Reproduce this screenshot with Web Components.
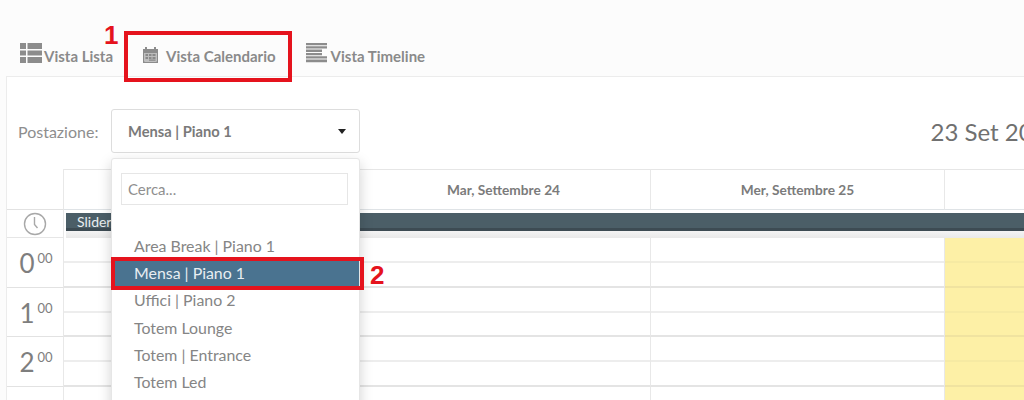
<!DOCTYPE html>
<html lang="it"><head><meta charset="utf-8"><title>Calendario</title>
<style>
html,body{margin:0;padding:0;width:1024px;height:400px;overflow:hidden;background:#fcfcfc;font-family:Lato,"Open Sans",sans-serif;color:#777}
</style></head><body>
<app-page></app-page>
<script>
function def(name,html,init){customElements.define(name,class extends HTMLElement{constructor(){super();const r=this.attachShadow({mode:"open"});r.innerHTML=html;if(init)init(this,r);}});}

def("view-tab",`<style>
:host{display:flex;align-items:center;height:100%;font:700 15px/18px Lato,sans-serif;color:#8a8a8a;gap:var(--gap,2px);padding:var(--pad,0)}
span{padding-top:6px}
::slotted(svg){display:block;flex:none}
</style><slot name="icon"></slot><span><slot></slot></span>`);

def("view-tabs",`<style>
:host{display:flex;align-items:flex-end;height:76px;box-sizing:border-box;padding:0 0 8px 20px}
.row{display:flex;height:30px;align-items:center}
</style><div class="row"><slot></slot></div>`);

def("select-box",`<style>
:host{display:flex;flex:none;align-items:center;justify-content:space-between;box-sizing:border-box;width:249px;height:44px;border:1px solid #ddd;border-radius:3px;background:#fff;padding:0 13px 0 16px;font:700 14.7px Lato,sans-serif;color:#7a7a7a}
i{display:block;width:0;height:0;border:4.5px solid transparent;border-top:5px solid #222;border-bottom:0}
</style><span><slot></slot></span><i></i>`);

def("cal-toolbar",`<style>
:host{display:flex;align-items:center;height:92px;box-sizing:border-box;padding:16px 0 0 11px;font:400 16px Lato,sans-serif;color:#8e8e8e;white-space:nowrap}
.l{width:93px;flex:none}
.d{margin-left:570.5px;flex:none;font:400 24px Lato,sans-serif;color:#707070}
</style><span class="l"><slot name="label"></slot></span><slot name="select"></slot><span class="d"><slot name="date"></slot></span>`);

def("cal-grid",`<style>
:host{display:grid;grid-template-columns:57px 293px 294px 294px 294px;grid-template-rows:41px 28px repeat(4,49.5px);width:1200px;font:400 14px Lato,sans-serif}
.c{box-sizing:border-box;border-right:1px solid #e8e8e8;background:#fff}
.h{border-top:1px solid #e6e6e6;border-bottom:1px solid #dfe3e6;display:flex;align-items:center;justify-content:center;font:700 13.7px Lato,sans-serif;color:#7b7b7b}
.corner{border-top:0;border-bottom:1px solid #e2e2e2}
.clock{display:flex;align-items:center;justify-content:center;border-bottom:1px solid #e6e6e6}
.bar{grid-column:2/6;margin-left:2px;padding:3px 0 0;box-sizing:border-box;background:linear-gradient(#fff 3px,#4b5e67 3px,#4b5e67 18px,#3d4b53 18px,#3d4b53 21px,#f4f4f4 21px,#e9e9e9 28px)}
.bar span{display:block;color:#e9eef0;font:400 14px/18px Lato,sans-serif;padding-left:11px}
.t{display:flex;align-items:flex-start;justify-content:center;color:#7e7e7e;font:400 26px/1 Lato,sans-serif;padding:12px 0 0 2px;box-sizing:border-box;border-bottom:1px solid #e2e2e2}
.t sup{font-size:13px;font-weight:400;line-height:1;margin:2px 0 0 3px}
.s{border-bottom:2px solid #e4e4e4;background-image:linear-gradient(#ededed,#ededed);background-repeat:no-repeat;background-size:100% 2px;background-position:0 23px}
.y{background-color:#fdf0a6;background-image:linear-gradient(#f6eaa3,#f6eaa3);border-bottom-color:#f0e3a0;border-right:0}
</style>
<div class="c h corner"></div><div class="c h"></div><div class="c h">Mar, Settembre 24</div><div class="c h">Mer, Settembre 25</div><div class="c h"></div>
<div class="c clock"><svg width="24" height="24" viewBox="0 0 24 24" fill="none" stroke="#a8a8a8" stroke-width="1.4"><circle cx="12" cy="12" r="10.5"/><path d="M11.500 5v7.500l3 3.500"/></svg></div><div class="bar"><span>Slider</span></div>
<div class="c t">0<sup>00</sup></div><div class="c s"></div><div class="c s"></div><div class="c s"></div><div class="c s y"></div>
<div class="c t">1<sup>00</sup></div><div class="c s"></div><div class="c s"></div><div class="c s"></div><div class="c s y"></div>
<div class="c t">2<sup>00</sup></div><div class="c s"></div><div class="c s"></div><div class="c s"></div><div class="c s y"></div>
<div class="c t"></div><div class="c s"></div><div class="c s"></div><div class="c s"></div><div class="c s y"></div>`);

def("drop-item",`<style>
:host{display:flex;align-items:center;height:27.2px;padding-left:22px;font:400 15.9px Lato,sans-serif;color:#858585}
:host([active]){background:#4a7390;color:#e8eef2}
</style><slot></slot>`);

def("drop-menu",`<style>
:host{display:block;position:absolute;left:111px;top:158px;width:249px;height:260px;box-sizing:border-box;background:#fff;border:1px solid #e6e6e6;border-radius:3px;box-shadow:0 5px 14px rgba(0,0,0,.18);padding:14px 0 0}
.s{display:flex;align-items:center;box-sizing:border-box;height:32px;margin:0 11px 0 9px;padding-left:6px;border:1px solid #e6e6e6;font:400 15px Lato,sans-serif;color:#8f8f8f}
.l{margin-top:27px}
</style><div class="s">Cerca...</div><div class="l"><slot></slot></div>`);

def("mark-box",`<style>
:host{display:block;position:absolute;box-sizing:border-box;border:4px solid #e5131d;pointer-events:none}
</style>`);
def("mark-num",`<style>
:host{display:block;position:absolute;font:700 26px/1 "Liberation Sans",Arial,sans-serif;color:#e5131d}
</style><slot></slot>`);

def("app-page",`<style>
:host{display:block;position:relative;width:1024px;height:400px;overflow:hidden}
.card{margin-left:6px;height:324px;overflow:hidden;background:#fff;border-top:1px solid #ececec;border-left:1px solid #ececec}
</style>
<view-tabs>
<view-tab style="--gap:2px"><svg slot="icon" width="22" height="22" viewBox="0 0 22 22" fill="#8c8c8c"><path d="M0 1h6v6H0zM7.500 1H22v6H7.500zM0 8.500h6v5H0zM7.500 8.500H22v5H7.500zM0 15h6v6H0zM7.500 15H22v6H7.500z"/></svg>Vista Lista</view-tab>
<view-tab style="--gap:8px;--pad:0 0 0 30px"><svg slot="icon" style="margin-top:3px" width="15" height="16" viewBox="0 0 15 16"><path fill="#8c8c8c" fill-rule="evenodd" d="M0 2h2V0h2v2h7V0h2v2h2v14H0zM1.500 6v8.500h12V6z"/><path fill="#bdbdbd" d="M1.500 6h12v8.500h-12z"/><path fill="#8a8a8a" d="M2.500 7h2.500v2H2.500zM6 7h2.500v2H6zM9.500 7h3v2h-3zM2.500 10h2.500v2H2.500zM6 10h2.500v2H6zM9.500 10h3v2h-3zM6 12.500h6.500v1.300H6z"/></svg>Vista Calendario</view-tab>
<view-tab style="--gap:3px;--pad:0 0 0 30px"><svg slot="icon" width="22" height="20" viewBox="0 0 22 20" fill="#8c8c8c"><path d="M0 0h21v2.300H0zM0 3.300h21v2.300H0zM0 6.600h16v2.300H0zM0 9.900h16v2.300H0zM0 13.200h21v2.300H0zM0 16.500h21v2.800H0z"/></svg>Vista Timeline</view-tab>
</view-tabs>
<div class="card">
<cal-toolbar><span slot="label">Postazione:</span><select-box slot="select">Mensa | Piano 1</select-box><span slot="date">23 Set 2019</span></cal-toolbar>
<cal-grid></cal-grid>
</div>
<drop-menu>
<drop-item>Area Break | Piano 1</drop-item><drop-item active>Mensa | Piano 1</drop-item><drop-item>Uffici | Piano 2</drop-item><drop-item>Totem Lounge</drop-item><drop-item>Totem | Entrance</drop-item><drop-item>Totem Led</drop-item>
</drop-menu>
<mark-box style="left:124px;top:31px;width:168px;height:51px"></mark-box>
<mark-box style="left:111px;top:257px;width:253px;height:33px"></mark-box>
<mark-num style="left:104px;top:22px">1</mark-num>
<mark-num style="left:370px;top:262px">2</mark-num>`);
</script></body></html>
